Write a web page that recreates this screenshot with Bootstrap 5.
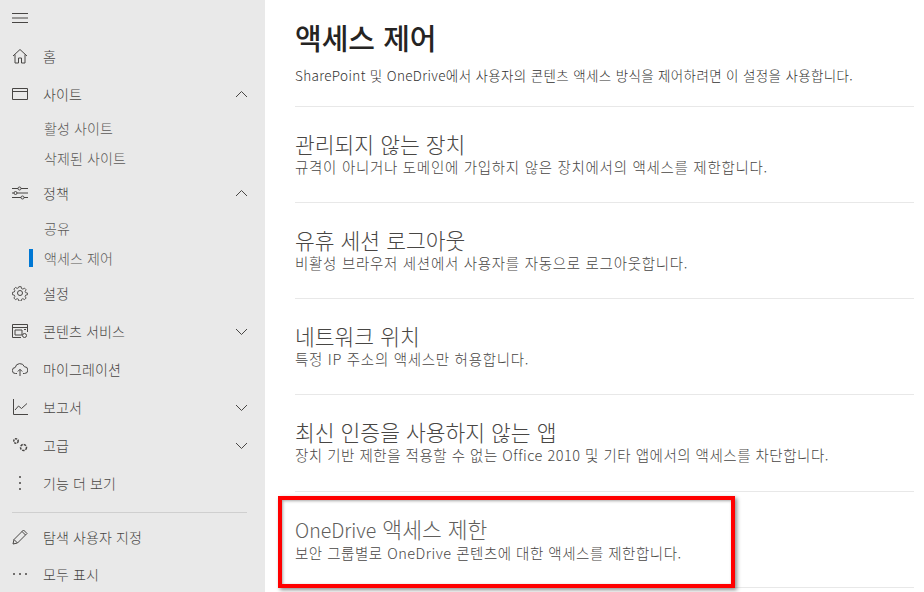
<!DOCTYPE html>
<html lang="ko">
<head>
<meta charset="UTF-8">
<title>액세스 제어</title>
<link rel="stylesheet" href="https://cdn.jsdelivr.net/npm/bootstrap@5.3.0/dist/css/bootstrap.min.css">
<style>
html, body { height: 592px; overflow: hidden; }
body { font-family: "Noto Sans CJK KR", "Open Sans", sans-serif; background: #fff; color: #323130; }
.shell { height: 592px; }
.side { width: 265px; flex: none; background: #e9e9e9; padding-top: 7px; overflow: hidden; }
.side-row { height: 38px; padding-left: 12px; padding-right: 17px; font-size: 14px; letter-spacing: .1px; font-weight: 300; color: #484644; }
.side-row svg.ico { width: 16px; height: 16px; margin-right: 15px; flex: none; }
.side-row .txt { flex: 1; }
.side-row svg.chev { width: 13px; height: 13px; flex: none; }
.menu-btn { height: 22px; margin-bottom: 8px; }
.sub-row { height: 30px; padding-left: 44px; font-size: 14px; letter-spacing: .1px; font-weight: 300; color: #5c5a58; position: relative; }
.sub-row.on::before { content: ""; position: absolute; left: 29px; top: 6px; width: 4px; height: 18px; background: #0078d4; }
.gap-before { margin-top: 1px; }
.last-row { height: 34px; }
.side-line { height: 1px; background: #cfcfcf; margin: 10px 18px 5px 12px; }
.main { flex: 1; padding-left: 30px; padding-right: 10px; min-width: 0; }
.page-title { font-size: 29px; font-weight: 500; color: #252423; line-height: 40px; margin: 17px 0 8px; }
.page-desc { font-size: 13.500px; letter-spacing: .35px; font-weight: 300; line-height: 20px; height: 20px; margin: 0 0 21px; color: #323130; white-space: nowrap; }
.opt { border-top: 1px solid #e8e8e8; height: 96px; padding-top: 24px; }
.opt h2 { font-size: 21.500px; font-weight: 300; line-height: 26px; margin: 0; color: #484644; white-space: nowrap; }
.opt p { font-size: 14.500px; letter-spacing: .5px; font-weight: 300; line-height: 16px; margin: 2px 0 0; color: #484644; white-space: nowrap; }
.opt p.hangul-line { letter-spacing: .7px; }
.opt-wrap { position: relative; margin-top: 1px; }
.opt-wrap h2 { color: #605e5c; }
.opt-end { border-top: 1px solid #e8e8e8; }
.latin-name { font-size: 19.500px; }
.hilite { position: absolute; left: -17px; top: 5px; width: 457px; height: 92px; border: 4px solid #f00; box-shadow: 2px 2px 4px rgba(0,0,0,.45), inset 1px 1px 3px rgba(0,0,0,.35); pointer-events: none; }
</style>
</head>
<body>
<div class="shell d-flex">
  <nav class="side">
    <div class="side-row menu-btn d-flex align-items-center">
      <svg class="ico" viewBox="0 0 16 16" fill="none" stroke="#484644"><path d="M0 3.5h16M0 8h16M0 12.5h16"/></svg>
    </div>
    <div class="side-row d-flex align-items-center">
      <svg class="ico" viewBox="0 0 16 16" fill="none" stroke="#484644"><path d="M1 8 8 1.5 15 8M3 6.5V15h3.5v-5h3v5H13V6.500"/></svg>
      <span class="txt">홈</span>
    </div>
    <div class="side-row d-flex align-items-center">
      <svg class="ico" viewBox="0 0 16 16" fill="none" stroke="#484644"><path d="M.5 2.500h15v11H.5zM.5 5.500h15"/></svg>
      <span class="txt">사이트</span>
      <svg class="chev" viewBox="0 0 13 13" fill="none" stroke="#484644"><path d="M1 9l5.500-5.500L12 9"/></svg>
    </div>
    <div class="sub-row d-flex align-items-center">활성 사이트</div>
    <div class="sub-row d-flex align-items-center">삭제된 사이트</div>
    <div class="side-row gap-before d-flex align-items-center">
      <svg class="ico" viewBox="0 0 16 16" fill="none" stroke="#484644"><path d="M0 3.500h6M9 3.500h7M0 8h2M5 8h11M0 12.500h9M12 12.500h4"/><circle cx="7.500" cy="3.500" r="1.500"/><circle cx="3.500" cy="8" r="1.500"/><circle cx="10.500" cy="12.500" r="1.500"/></svg>
      <span class="txt">정책</span>
      <svg class="chev" viewBox="0 0 13 13" fill="none" stroke="#484644"><path d="M1 9l5.500-5.500L12 9"/></svg>
    </div>
    <div class="sub-row gap-before d-flex align-items-center">공유</div>
    <div class="sub-row on d-flex align-items-center">액세스 제어</div>
    <div class="side-row gap-before d-flex align-items-center">
      <svg class="ico" viewBox="0 0 16 16" fill="none" stroke="#484644"><circle cx="8" cy="8" r="2.500"/><path d="M6.700 1h2.600l.4 2 1.500.7 1.800-1.100 1.800 1.800-1.100 1.800.7 1.500 2 .4v1.800l-2 .4-.7 1.500 1.100 1.800-1.800 1.800-1.800-1.100-1.500.7-.4 2H6.700l-.4-2-1.500-.7-1.800 1.100-1.800-1.800 1.100-1.800-.7-1.500-2-.4V7.300l2-.4.700-1.500-1.100-1.800 1.800-1.800 1.800 1.100 1.500-.7z" transform="translate(.8 .8) scale(.9)"/></svg>
      <span class="txt">설정</span>
    </div>
    <div class="side-row d-flex align-items-center">
      <svg class="ico" viewBox="0 0 16 16" fill="none" stroke="#484644"><path d="M9 14.500H.5v-13h15V9M.5 4.500h15M3 7h7v5H3zM12 6.500h2"/><circle cx="12.500" cy="12.500" r="2"/></svg>
      <span class="txt">콘텐츠 서비스</span>
      <svg class="chev" viewBox="0 0 13 13" fill="none" stroke="#484644"><path d="M1 4l5.500 5.500L12 4"/></svg>
    </div>
    <div class="side-row d-flex align-items-center">
      <svg class="ico" viewBox="0 0 16 16" fill="none" stroke="#484644"><path d="M5 12.500H3.500a3 3 0 0 1-.300-6 4.800 4.800 0 0 1 9.200-.800 3.400 3.400 0 0 1 .1 6.800H11M8 15V8.500M5.800 10.500 8 8.300l2.200 2.200"/></svg>
      <span class="txt">마이그레이션</span>
    </div>
    <div class="side-row d-flex align-items-center">
      <svg class="ico" viewBox="0 0 16 16" fill="none" stroke="#484644"><path d="M1.500 0v15.500H16M3 11l3.500-4 3 2.500L15 4.500"/></svg>
      <span class="txt">보고서</span>
      <svg class="chev" viewBox="0 0 13 13" fill="none" stroke="#484644"><path d="M1 4l5.500 5.500L12 4"/></svg>
    </div>
    <div class="side-row d-flex align-items-center">
      <svg class="ico" viewBox="0 0 16 16" fill="none" stroke="#484644"><circle cx="4" cy="4" r="2.200" stroke-width="1.500" stroke-dasharray="2 .8"/><circle cx="11.500" cy="10.500" r="3" stroke-width="1.500" stroke-dasharray="2.500 1"/></svg>
      <span class="txt">고급</span>
      <svg class="chev" viewBox="0 0 13 13" fill="none" stroke="#484644"><path d="M1 4l5.500 5.500L12 4"/></svg>
    </div>
    <div class="side-row d-flex align-items-center">
      <svg class="ico" viewBox="0 0 16 16" fill="#484644"><circle cx="8" cy="2" r="1"/><circle cx="8" cy="8" r="1"/><circle cx="8" cy="14" r="1"/></svg>
      <span class="txt">기능 더 보기</span>
    </div>
    <div class="side-line"></div>
    <div class="side-row d-flex align-items-center">
      <svg class="ico" viewBox="0 0 16 16" fill="none" stroke="#484644"><path d="M1 15l1-4.500L11.500 1 15 4.500 5.500 14zM2 10.500 5.500 14M10 2.500 13.500 6"/></svg>
      <span class="txt">탐색 사용자 지정</span>
    </div>
    <div class="side-row last-row gap-before d-flex align-items-center">
      <svg class="ico" viewBox="0 0 16 16" fill="#484644"><circle cx="2" cy="8" r="1"/><circle cx="8" cy="8" r="1"/><circle cx="14" cy="8" r="1"/></svg>
      <span class="txt">모두 표시</span>
    </div>
  </nav>
  <main class="main">
    <h1 class="page-title">액세스 제어</h1>
    <p class="page-desc">SharePoint 및 OneDrive에서 사용자의 콘텐츠 액세스 방식을 제어하려면 이 설정을 사용합니다.</p>
    <div class="opt"><h2>관리되지 않는 장치</h2><p class="hangul-line">규격이 아니거나 도메인에 가입하지 않은 장치에서의 액세스를 제한합니다.</p></div>
    <div class="opt"><h2>유휴 세션 로그아웃</h2><p class="hangul-line">비활성 브라우저 세션에서 사용자를 자동으로 로그아웃합니다.</p></div>
    <div class="opt"><h2>네트워크 위치</h2><p class="hangul-line">특정 IP 주소의 액세스만 허용합니다.</p></div>
    <div class="opt"><h2>최신 인증을 사용하지 않는 앱</h2><p>장치 기반 제한을 적용할 수 없는 Office 2010 및 기타 앱에서의 액세스를 차단합니다.</p></div>
    <div class="opt-wrap">
      <div class="opt"><h2><span class="latin-name">OneDrive</span> 액세스 제한</h2><p>보안 그룹별로 OneDrive 콘텐츠에 대한 액세스를 제한합니다.</p></div>
      <div class="opt-end"></div>
      <div class="hilite"></div>
    </div>
  </main>
</div>
<script src="https://cdn.jsdelivr.net/npm/bootstrap@5.3.0/dist/js/bootstrap.bundle.min.js"></script>
</body>
</html>
